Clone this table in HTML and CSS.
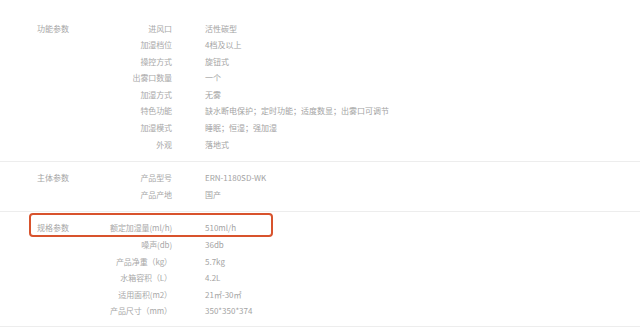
FILE: index.html
```html
<!DOCTYPE html>
<html lang="zh-CN">
<head>
<meta charset="utf-8">
<title>参数</title>
<link rel="stylesheet" href="styles.css">
</head>
<body>
<div class="spec">
  <section class="group">
    <div class="name">功能参数</div>
    <dl class="rows">
      <dt>进风口</dt><dd>活性碳型</dd>
      <dt>加湿档位</dt><dd>4档及以上</dd>
      <dt>操控方式</dt><dd>旋钮式</dd>
      <dt>出雾口数量</dt><dd>一个</dd>
      <dt>加湿方式</dt><dd>无雾</dd>
      <dt>特色功能</dt><dd>缺水断电保护；定时功能；适度数显；出雾口可调节</dd>
      <dt>加湿模式</dt><dd>睡眠；恒湿；强加湿</dd>
      <dt>外观</dt><dd>落地式</dd>
    </dl>
  </section>
  <section class="group">
    <div class="name">主体参数</div>
    <dl class="rows">
      <dt>产品型号</dt><dd>ERN-1180SD-WK</dd>
      <dt>产品产地</dt><dd>国产</dd>
    </dl>
  </section>
  <section class="group last">
    <div class="name">规格参数</div>
    <dl class="rows">
      <dt>额定加湿量(ml/h)</dt><dd>510ml/h</dd>
      <dt>噪声(db)</dt><dd>36db</dd>
      <dt>产品净重（kg）</dt><dd>5.7kg</dd>
      <dt>水箱容积（L）</dt><dd>4.2L</dd>
      <dt>适用面积(m2）</dt><dd>21㎡-30㎡</dd>
      <dt>产品尺寸（mm）</dt><dd>350*350*374</dd>
    </dl>
    <div class="highlight"></div>
  </section>
</div>
</body>
</html>
```

FILE: styles.css
```css
* { box-sizing: border-box; }
html, body {
  margin: 0;
  padding: 0;
  background: #fff;
}
body {
  font-family: "Noto Sans CJK SC", "Noto Sans", sans-serif;
  font-size: 8px;
  color: #a6a6a6;
  overflow: hidden;
}
.spec {
  padding-top: 12.5px;
}
.group {
  position: relative;
  display: flex;
  padding: 8px 0 8px 37px;
  border-bottom: 1px solid #ededed;
}
.group.last {
  padding-bottom: 6px;
}
.name {
  width: 60px;
  line-height: 16.6px;
  color: #a6a6a6;
}
.rows {
  margin: 0;
  display: grid;
  grid-template-columns: 75px auto;
  column-gap: 33px;
}
.rows dt, .rows dd {
  margin: 0;
  line-height: 16.6px;
  height: 16.6px;
  white-space: nowrap;
}
.rows dt {
  text-align: right;
  color: #a8a8a8;
  letter-spacing: -0.1px;
}
.rows dd {
  color: #a3a3a3;
}
.highlight {
  position: absolute;
  left: 29px;
  top: 1px;
  width: 244px;
  height: 24px;
  border: 2px solid #d8532d;
  border-radius: 4px;
}
```
